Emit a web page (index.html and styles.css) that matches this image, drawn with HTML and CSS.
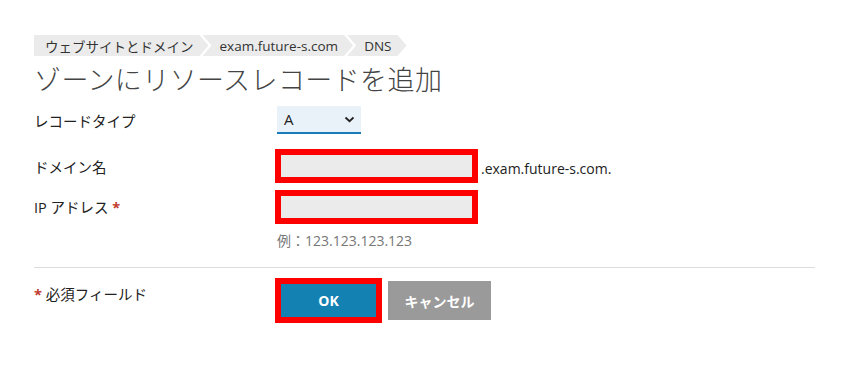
FILE: index.html
```html
<!DOCTYPE html>
<html lang="ja">
<head>
	<meta charset="utf-8">
	<title>ゾーンにリソースレコードを追加</title>
	<link rel="stylesheet" href="styles.css">
</head>
<body>

<!-- 페이지 -->
<div class="page">

	<!-- パンくず -->
	<div class="crumbs">
		<span class="crumb first">ウェブサイトとドメイン</span>
		<span class="crumb">exam.future-s.com</span>
		<span class="crumb">DNS</span>
	</div>

	<h1 class="title">ゾーンにリソースレコードを追加</h1>

	<form class="form" action="" method="get">
		<div class="row">
			<label class="label">レコードタイプ</label>
			<div class="field">
				<div class="select">
					<span>A</span>
					<svg width="11" height="7" viewBox="0 0 11 7"><path d="M1.5 1.5 L5.5 5.2 L9.5 1.5" fill="none" stroke="#222" stroke-width="1.8"/></svg>
				</div>
			</div>
		</div>

		<div class="row row-name">
			<label class="label">ドメイン名</label>
			<div class="field">
				<input class="input" type="text" name="name">
				<span class="suffix">.exam.future-s.com.</span>
			</div>
		</div>

		<div class="row row-ip">
			<label class="label">IP アドレス <b class="req">*</b></label>
			<div class="field col">
				<input class="input" type="text" name="ip">
				<span class="hint">例：123.123.123.123</span>
			</div>
		</div>

		<div class="line"></div>

		<div class="row row-btn">
			<span class="label"><b class="req">*</b> 必須フィールド</span>
			<div class="field">
				<button type="button" class="btn ok">OK</button>
				<button type="button" class="btn cancel">キャンセル</button>
			</div>
		</div>
	</form>
</div>

</body>
</html>
```

FILE: styles.css
```css
* { margin:0px; padding:0px; box-sizing:border-box; }
body { background:#fff; color:#222; font-family:"Open Sans", "Noto Sans CJK JP", sans-serif; }

.page { padding:35px 49px 0px 34px; }

.crumbs { display:flex; height:21px; }
.crumb { display:flex; align-items:center; height:21px; padding:0px 15px 0px 17px; margin-right:-6px; background:#ebebeb; color:#333; font-size:13.5px; clip-path:polygon(0 0, calc(100% - 9px) 0, 100% 50%, calc(100% - 9px) 100%, 0 100%, 9px 50%); }
.crumb.first { padding-left:11px; clip-path:polygon(0 0, calc(100% - 9px) 0, 100% 50%, calc(100% - 9px) 100%, 0 100%); }

.title { font-weight:300; font-size:27px; line-height:1; color:#444; margin-top:10px; letter-spacing:0.4px; }

.form { margin-top:13px; }
.row { display:flex; align-items:center; }
.label { width:243px; font-size:14.5px; color:#222; }
.req { color:#c0392b; font-weight:bold; }
.field { display:flex; align-items:center; }
.field.col { flex-direction:column; align-items:flex-start; }

.select { width:84px; height:28px; background:#eaf2f9; border-bottom:2px solid #1a7bb9; display:flex; align-items:center; justify-content:space-between; padding:0px 6px 0px 7px; font-size:15px; color:#222; }

.row-name { margin-top:15px; }
.row-ip { margin-top:7px; align-items:flex-start; }
.row-ip .label { padding-top:6px; }

.input { width:203px; height:34px; margin-left:-2px; border:6px solid #ff0000; background:#ebebeb; outline:none; }
.suffix { font-size:14px; margin-left:3px; padding-top:5px; color:#222; }
.hint { font-size:14px; color:#777; margin-top:6px; }

.line { height:1px; background:#ddd; margin-top:17px; }

.row-btn { margin-top:10px; align-items:flex-start; }
.row-btn .label { padding-top:5px; }
.btn { border:none; color:#fff; font:bold 14px "Open Sans", "Noto Sans CJK JP", sans-serif; cursor:pointer; }
.btn.ok { width:107px; height:45px; margin-left:-2px; background:#1481b3; border:6px solid #ff0000; }
.btn.cancel { width:103px; height:39px; background:#9a9a9a; margin-left:6px; }
```
